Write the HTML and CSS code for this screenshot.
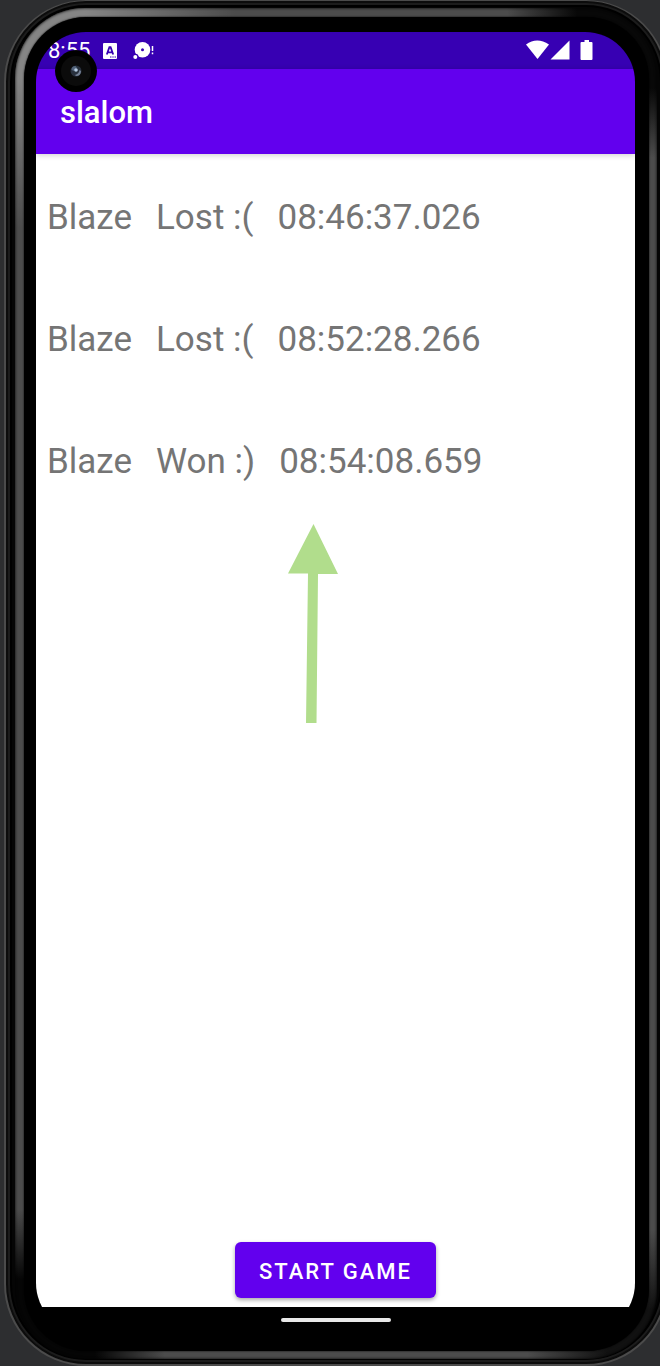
FILE: index.html
```html
<!DOCTYPE html>
<html lang="en">
<head>
<meta charset="utf-8">
<meta name="viewport" content="width=device-width, initial-scale=1">
<title>slalom</title>
<link rel="stylesheet" href="styles.css">
</head>
<body>
<div class="phone">
  <div class="rim">
    <div class="bezel">
      <div class="screen">
        <div class="status-bar">
          <span class="clock">8:55</span>
          <svg class="icon-keyboard" width="14" height="16" viewBox="0 0 14 16" aria-hidden="true">
            <rect width="14" height="16" rx="1" fill="#fff"/>
            <path d="M3.800 11.500 6.400 4.200h1.200l2.600 7.300M5 9.300h4" fill="none" stroke="#3700b3" stroke-width="1.800"/>
            <path d="M7 14h1.500M9.300 14h1.400M11.500 14H13" stroke="#3700b3"/>
          </svg>
          <svg class="icon-debug" width="21" height="17" viewBox="0 0 21 17" aria-hidden="true">
            <circle cx="9.500" cy="7.800" r="7.800" fill="#fff"/>
            <circle cx="9.500" cy="7.800" r="1.500" fill="#3700b3"/>
            <circle cx="2.300" cy="15" r="3.200" fill="#3700b3"/>
            <circle cx="2.300" cy="15" r="2" fill="#fff"/>
            <path d="M19.500 4v5M19.500 10.500v1.800" stroke="#fff" stroke-width="1.500"/>
          </svg>
          <span class="signals">
            <svg width="68" height="21" viewBox="0 0 68 21" aria-hidden="true">
              <path d="M0 4.500Q11 -3.500 23 4.500L11.500 19Z" fill="#fff"/>
              <path d="M24.500 19.500 43.500.500v19Z" fill="#fff"/>
              <path d="M58.500 0h4.500v2h2.500q1 0 1 1v16q0 1-1 1h-10q-1 0-1-1V3q0-1 1-1h3Z" fill="#fff"/>
            </svg>
          </span>
          <svg class="camera" width="42" height="42" viewBox="0 0 42 42" aria-hidden="true">
            <circle cx="21" cy="21" r="21" fill="#000"/>
            <circle cx="21" cy="21" r="15" fill="#0b0b0b"/>
            <circle cx="21" cy="21" r="5.500" fill="#28303d"/>
            <path d="M16.500 20q0-4 4-4l1.500 2-3 3Z" fill="#52637a"/>
            <path d="M20 25q4-1 4.500-5l1.500 1q0 5-5 5Z" fill="#748095"/>
            <circle cx="21" cy="20" r="1.800" fill="#b6cbe3"/>
          </svg>
        </div>
        <header class="app-bar"><h1 class="title">slalom</h1></header>
        <main class="content">
          <ul class="results">
            <li class="result"><span>Blaze</span><span>Lost :(</span><time>08:46:37.026</time></li>
            <li class="result"><span>Blaze</span><span>Lost :(</span><time>08:52:28.266</time></li>
            <li class="result"><span>Blaze</span><span>Won :)</span><time>08:54:08.659</time></li>
          </ul>
          <svg class="arrow" width="50" height="199" viewBox="0 0 50 199" aria-hidden="true">
            <path d="M25.500 0 50 50H30L28.500 199H18L20 49.500H0Z" fill="#b1dd8c"/>
          </svg>
          <button class="start" type="button">START GAME</button>
        </main>
        <div class="nav-bar"><div class="home"></div></div>
      </div>
    </div>
  </div>
</div>
</body>
</html>
```
FILE: styles.css
```css
* {
  box-sizing: border-box;
}

body {
  margin: 0;
  overflow: hidden;
  background: #2d2e30;
  font-family: Roboto, "Noto Sans", sans-serif;
}

.phone {
  display: flex;
  min-height: 100vh;
  margin: 0 -8px 0 4px;
  padding: 7px 9px 5px;
  border: 2px solid #4b4b4b;
  border-top-width: 1px;
  border-radius: 82px;
  background: #050505;
  box-shadow: inset 0 0 0 2px #0c0c0c, inset 0 0 0 4px #1c1c1c, inset 0 0 0 6px #000;
}

.rim {
  display: flex;
  flex: 1;
  padding: 9px 8px 8px 9px;
  border-radius: 70px;
  background:
    radial-gradient(circle at 0 0, #858585 70px, transparent 220px),
    radial-gradient(circle at 100% 0, #080808 80px, transparent 150px),
    radial-gradient(circle at 0 100%, #050505 80px, transparent 150px),
    radial-gradient(circle at 100% 100%, #111 50px, transparent 130px),
    #4c4c4c;
  box-shadow: inset 0 0 3px #000;
}

.bezel {
  display: flex;
  flex: 1;
  padding: 15px 14px 18px 12px;
  border-radius: 62px;
  background: #000;
  box-shadow: 0 0 2px #000;
}

.screen {
  position: relative;
  display: flex;
  flex: 1;
  flex-direction: column;
  overflow: hidden;
  border-radius: 50px;
  background: #000;
}

.status-bar {
  display: flex;
  align-items: center;
  height: 37px;
  padding: 0 41px 0 12px;
  background: #3700b3;
  color: #fff;
}

.clock {
  font-size: 22px;
  line-height: 26px;
}

.icon-keyboard {
  margin-left: 13px;
}

.icon-debug {
  margin-left: 16px;
}

.signals {
  display: flex;
  margin-left: auto;
}

.camera {
  position: absolute;
  top: 18px;
  left: 19px;
  z-index: 2;
}

.app-bar {
  position: relative;
  z-index: 1;
  display: flex;
  align-items: center;
  min-height: 85px;
  padding: 2px 24px 0;
  background: #6200ee;
  box-shadow: 0 1px 6px rgba(0, 0, 0, 0.2);
  color: #fff;
}

.title {
  margin: 0;
  font-size: 31px;
  font-weight: 500;
  line-height: 36px;
}

.content {
  display: flex;
  flex: 1;
  flex-direction: column;
  padding: 43px 11px 9px;
  background: #fff;
}

.results {
  display: flex;
  flex-direction: column;
  gap: 80px;
  margin: 0;
  padding: 0;
  list-style: none;
}

.result {
  display: flex;
  gap: 24px;
  color: #757575;
  font-size: 35px;
  line-height: 42px;
}

.arrow {
  margin: 41px 0 0 241px;
}

.start {
  align-self: center;
  margin-top: auto;
  height: 56px;
  padding: 2px 24px 0;
  border: 0;
  border-radius: 6px;
  background: #6200ee;
  box-shadow: 0 2px 4px rgba(0, 0, 0, 0.35);
  color: #fff;
  font-family: inherit;
  font-size: 22px;
  font-weight: 500;
  letter-spacing: 2px;
}

.nav-bar {
  display: flex;
  justify-content: center;
  height: 26px;
  padding-top: 11px;
  background: #000;
}

.home {
  width: 110px;
  height: 4px;
  border-radius: 2px;
  background: #e8e8e8;
}
```
